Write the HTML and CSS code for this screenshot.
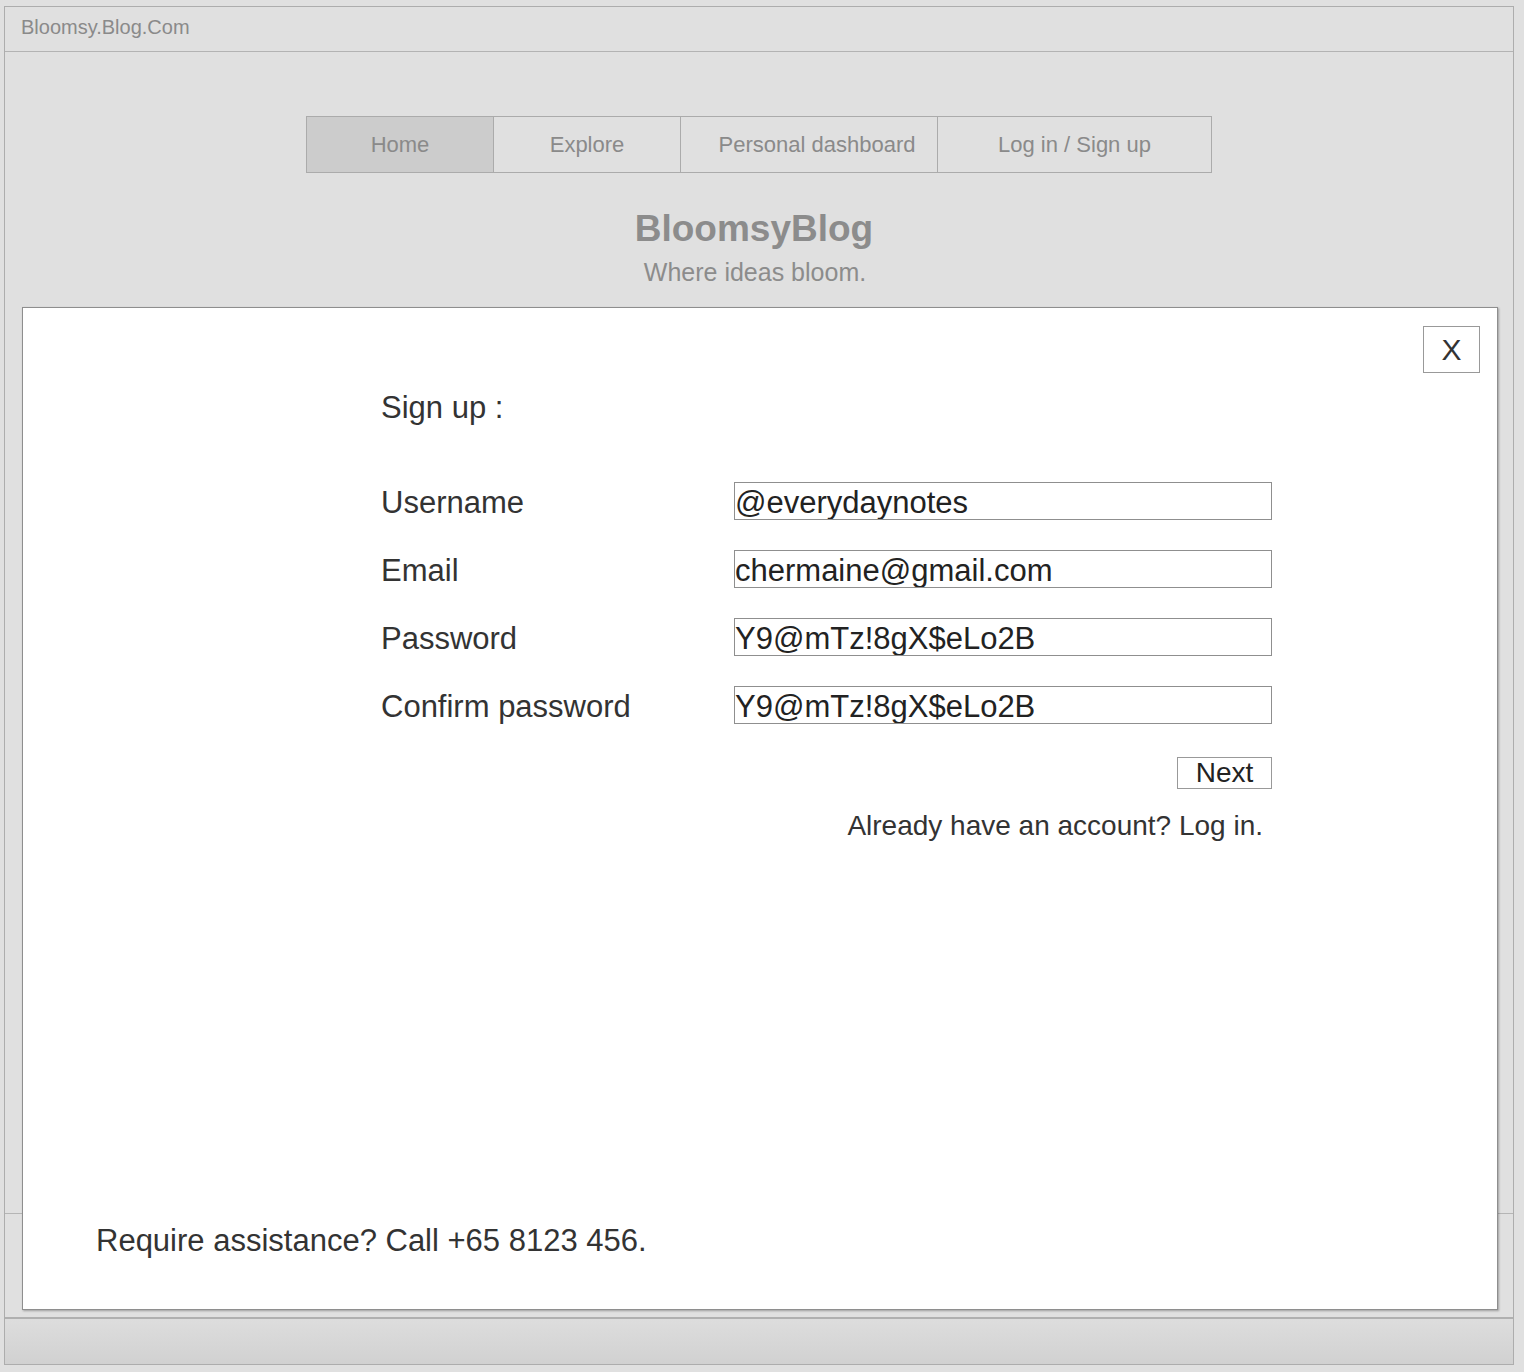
FILE: index.html
```html
<!DOCTYPE html>
<html>
  <head>
    <meta charset="UTF-8">
    <title>BloomsyBlog - Sign up</title>
    <link rel="stylesheet" href="styles.css">
  </head>
  <body>
    <div class="frame">
      <div class="topbar">Bloomsy.Blog.Com</div>
      <div class="page">
        <nav class="nav">
          <a class="nav-item active" href="#">Home</a>
          <a class="nav-item" href="#">Explore</a>
          <a class="nav-item wide" href="#">Personal dashboard</a>
          <a class="nav-item wider" href="#">Log in / Sign up</a>
        </nav>
        <h1 class="brand">BloomsyBlog</h1>
        <p class="tagline">Where ideas bloom.</p>
      </div>
      <div class="page-footer"></div>
      <div class="statusbar"></div>
    </div>

    <div class="modal">
      <div class="modal-top">
        <button type="button" class="close">X</button>
      </div>
      <form class="signup" id="signupForm">
        <h2>Sign up :</h2>
        <div class="fields">
          <label for="username">Username</label>
          <input type="text" id="username" name="username" value="@everydaynotes">
          <label for="email">Email</label>
          <input type="text" id="email" name="email" value="chermaine@gmail.com">
          <label for="password">Password</label>
          <input type="text" id="password" name="password" value="Y9@mTz!8gX$eLo2B">
          <label for="confirm">Confirm password</label>
          <input type="text" id="confirm" name="confirm" value="Y9@mTz!8gX$eLo2B">
        </div>
        <div class="actions">
          <button type="submit" class="next">Next</button>
        </div>
        <p class="login-link">Already have an account? Log in.</p>
      </form>
      <p class="help">Require assistance? Call +65 8123 456.</p>
    </div>
  </body>
</html>
```

FILE: styles.css
```css
body {
  background-color: #e0e0e0;
  font-family: "Liberation Sans", Arial, sans-serif;
  margin: 0;
  padding: 0;
}

.frame {
  border: 1px solid #adadad;
  box-sizing: border-box;
  display: flex;
  flex-direction: column;
  height: 1359px;
  margin: 6px 10px 0 4px;
}

.topbar {
  border-bottom: 1px solid #b3b3b3;
  color: #8a8a8a;
  font-size: 20px;
  height: 44px;
  line-height: 40px;
  padding-left: 16px;
}

.page {
  align-items: center;
  display: flex;
  flex: 1;
  flex-direction: column;
}

.nav {
  display: flex;
  margin-top: 64px;
}

.nav-item {
  border: 1px solid #ababab;
  box-sizing: border-box;
  color: #8a8a8a;
  font-size: 22px;
  height: 57px;
  line-height: 55px;
  margin-left: -1px;
  text-align: center;
  text-decoration: none;
  width: 188px;
}

.nav-item:first-child {
  margin-left: 0;
}

.nav-item.active {
  background-color: #cccccc;
}

.nav-item.wide {
  padding-left: 16px;
  width: 258px;
}

.nav-item.wider {
  width: 275px;
}

.brand {
  color: #8c8c8c;
  font-size: 37px;
  line-height: 42px;
  margin: 35px 10px 0 0;
}

.tagline {
  color: #8c8c8c;
  font-size: 25px;
  line-height: 28px;
  margin: 8px 8px 0 0;
}

.page-footer {
  border-top: 1px solid #b5b5b5;
  box-sizing: border-box;
  height: 104px;
}

.statusbar {
  background: linear-gradient(#dddddd, #d1d1d1);
  border-top: 2px solid #b0b0b0;
  box-sizing: border-box;
  height: 47px;
}

/* sign up dialog sits over the page */
.modal {
  background-color: #fff;
  border: 1px solid #8e8e8e;
  box-shadow: 1px 1px 2px rgba(0, 0, 0, 0.3);
  box-sizing: border-box;
  color: #333;
  display: flex;
  flex-direction: column;
  height: 1003px;
  left: 22px;
  position: absolute;
  top: 307px;
  width: 1476px;
}

.modal-top {
  display: flex;
  justify-content: flex-end;
  padding: 18px 17px 0;
}

.close {
  background-color: #fff;
  border: 1px solid #999;
  color: #333;
  font-family: inherit;
  font-size: 30px;
  height: 47px;
  padding: 0;
  width: 57px;
}

.signup {
  margin-left: 358px;
  width: 891px;
}

.signup h2 {
  font-size: 31px;
  font-weight: normal;
  line-height: 36px;
  margin: 17px 0 0;
}

.fields {
  align-items: center;
  display: grid;
  grid-template-columns: 353px 538px;
  grid-auto-rows: 38px;
  margin-top: 56px;
  row-gap: 30px;
}

.fields label {
  font-size: 31px;
  line-height: 34px;
  padding-top: 3px;
}

.fields input {
  background-color: #fff;
  border: 1px solid #8f8f8f;
  box-sizing: border-box;
  color: #222;
  font-family: inherit;
  font-size: 31px;
  height: 38px;
  margin: 0;
  padding: 4px 0 0;
  width: 538px;
}

.actions {
  display: flex;
  justify-content: flex-end;
  margin-top: 33px;
}

.next {
  background-color: #fff;
  border: 1px solid #999;
  box-sizing: border-box;
  color: #222;
  font-family: inherit;
  font-size: 28px;
  height: 32px;
  line-height: 30px;
  padding: 0;
  width: 95px;
}

.login-link {
  font-size: 28px;
  line-height: 32px;
  margin: 21px 9px 0 0;
  text-align: right;
}

.help {
  font-size: 31px;
  line-height: 36px;
  margin: auto 0 50px;
  padding-left: 73px;
}
```
